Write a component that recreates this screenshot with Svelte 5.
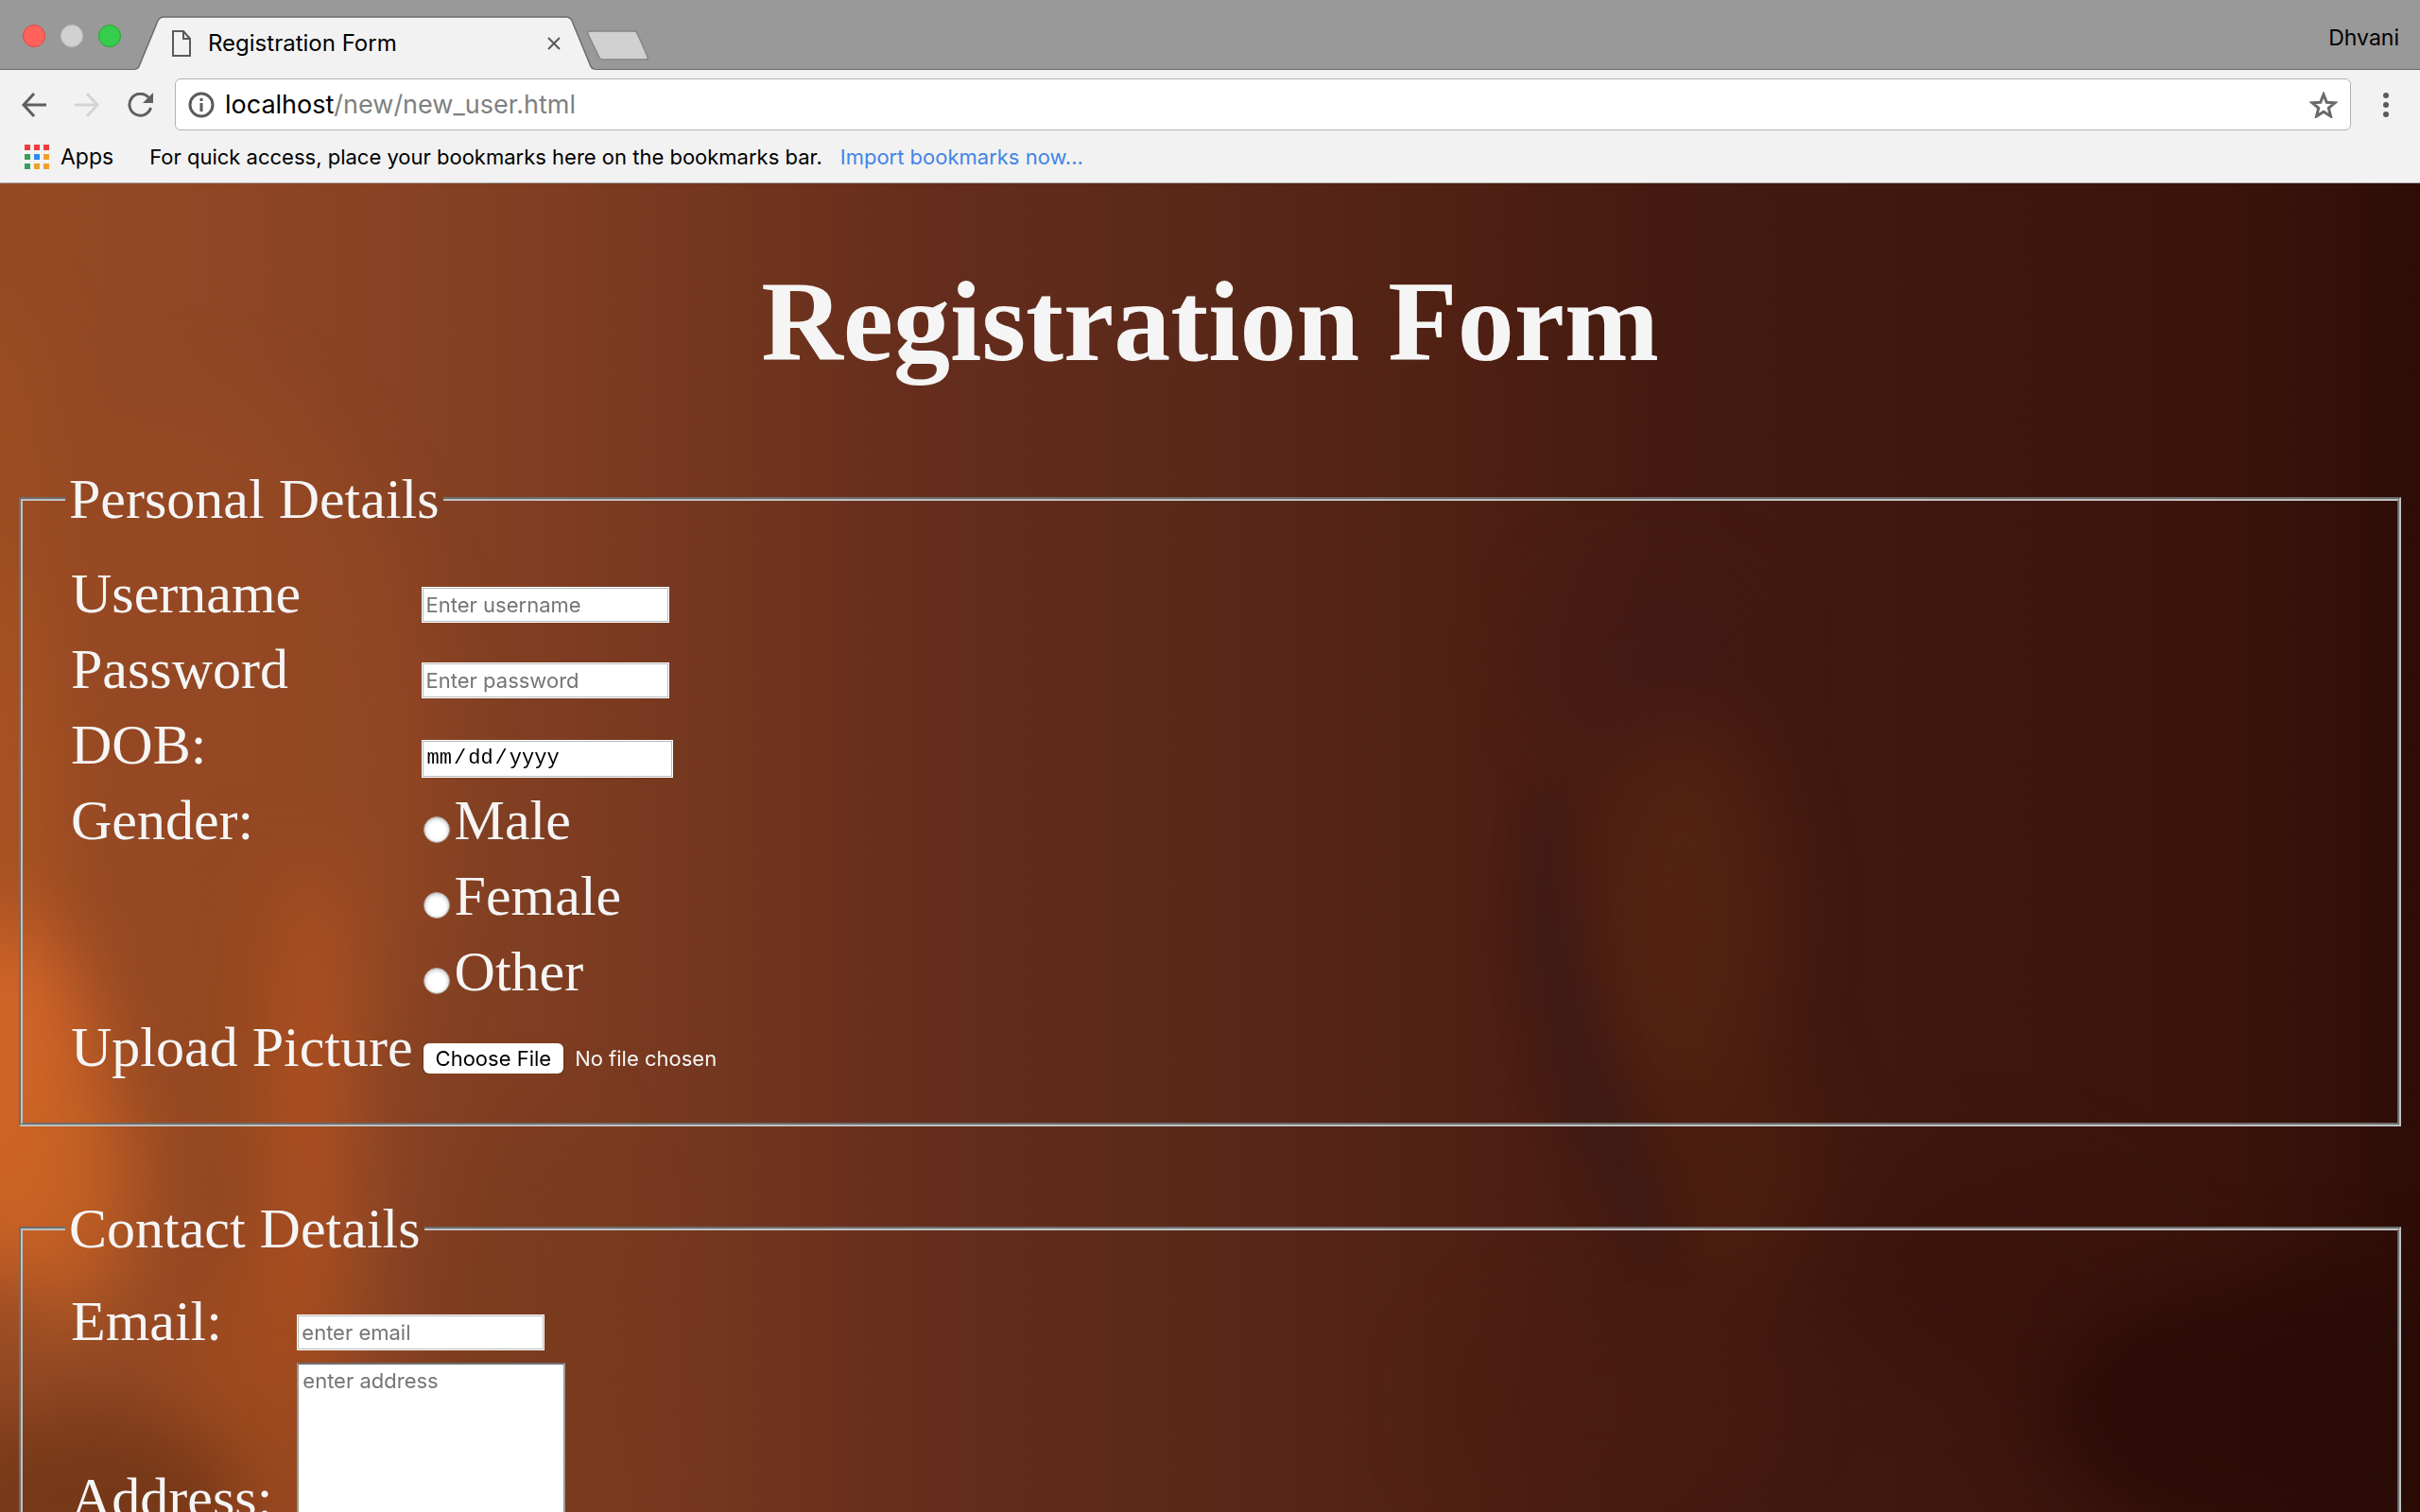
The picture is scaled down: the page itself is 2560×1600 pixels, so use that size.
<script>
  const genders = ['Male', 'Female', 'Other'];
  const appColors = ['#f23c3c', '#f23c3c', '#f23c3c', '#36a05c', '#2a8cf0', '#f0a02a', '#36a05c', '#f0a02a', '#f0a02a'];
  // Soft patches of light and shade on the backdrop, painted in order.
  const blobs = [
    { x: 0, y: 330, rx: 50, ry: 200, c: '#a8521f', o: 0.4 },
    { x: 220, y: 640, rx: 240, ry: 420, c: '#984a23', o: 0.6 },
    { x: 0, y: 760, rx: 60, ry: 360, c: '#b85a22', o: 0.6 },
    { x: 10, y: 970, rx: 95, ry: 190, c: '#d96829', o: 0.85 },
    { x: 70, y: 1070, rx: 80, ry: 140, c: '#c86324', o: 0.7 },
    { x: 330, y: 1010, rx: 34, ry: 300, c: '#bf5522', o: 0.8 },
    { x: 270, y: 1280, rx: 90, ry: 180, c: '#a84c1c', o: 0.6 },
    { x: 245, y: 900, rx: 26, ry: 200, c: '#964819', o: 0.6 },
    { x: 90, y: 1390, rx: 170, ry: 90, c: '#6e3415', o: 0.8 },
    { x: 560, y: 1240, rx: 110, ry: 260, c: '#74381a', o: 0.4 },
    { x: 1740, y: 500, rx: 120, ry: 90, c: '#421a18', o: 0.4 },
    { x: 1780, y: 780, rx: 100, ry: 210, c: '#582513', o: 0.7 },
    { x: 1830, y: 1040, rx: 90, ry: 140, c: '#4f200d', o: 0.6 },
    { x: 1700, y: 1290, rx: 180, ry: 100, c: '#4b1c0f', o: 0.5 },
    { x: 2100, y: 1150, rx: 180, ry: 120, c: '#38120a', o: 0.5 },
    { x: 2440, y: 1300, rx: 280, ry: 150, c: '#280a05', o: 0.75 }
  ];
</script>

<div class="window">
  <header>
    <div class="tabstrip">
      <div class="lights">
        <button class="light red" aria-label="Close window"></button>
        <button class="light gray" aria-label="Minimize window"></button>
        <button class="light green" aria-label="Zoom window"></button>
      </div>
      <div class="tab">
        <svg class="shape" viewBox="0 0 486 57" width="486" height="57" aria-hidden="true">
          <path d="M0 56 C3 56 4 54 5 51 L24 5 Q26 1 30 1 H456 Q460 1 462 5 L481 51 C482 54 483 56 486 56 V57 H0Z" fill="#f2f2f2" />
          <path d="M0 56 C3 56 4 54 5 51 L24 5 Q26 1 30 1 H456 Q460 1 462 5 L481 51 C482 54 483 56 486 56" fill="none" stroke="#6c6c6c" stroke-width="1.500" />
        </svg>
        <svg class="file" viewBox="0 0 20 28" width="20" height="28" aria-hidden="true">
          <path d="M1 1H12L19 9V27H1ZM12 1V9H19" fill="none" stroke="#5a5a5a" stroke-width="2" />
        </svg>
        <span class="title">Registration Form</span>
        <button class="close" aria-label="Close tab">
          <svg viewBox="0 0 14 14" width="14" height="14"><path d="M1 1L13 13M13 1L1 13" stroke="#5a5a5a" stroke-width="2" /></svg>
        </button>
      </div>
      <button class="newtab" aria-label="New tab">
        <svg viewBox="0 0 66 33" width="66" height="33">
          <path d="M3 1H50Q52 1 53 3L64 28Q65 31 62 31H16Q14 31 13 29L1 4Q0 1 3 1Z" fill="#d0d0d0" stroke="#858585" stroke-width="1.500" />
        </svg>
      </button>
      <button class="user">Dhvani</button>
    </div>
    <div class="toolbar">
      <button aria-label="Back">
        <svg viewBox="0 0 26 26" width="26" height="26"><path d="M26 13H2M13 1L2 13L13 25" fill="none" stroke="#5f5f5f" stroke-width="3" /></svg>
      </button>
      <button aria-label="Forward">
        <svg viewBox="0 0 26 26" width="26" height="26"><path d="M0 13H24M13 1L24 13L13 25" fill="none" stroke="#d4d4d4" stroke-width="3" /></svg>
      </button>
      <button aria-label="Reload">
        <svg viewBox="0 0 28 26" width="28" height="26">
          <path d="M22 5A11.500 11.500 0 1 0 24.500 16" fill="none" stroke="#5f5f5f" stroke-width="3" />
          <path d="M27 0V11H16Z" fill="#5f5f5f" />
        </svg>
      </button>
      <div class="omnibox">
        <svg viewBox="0 0 28 28" width="28" height="28" aria-hidden="true">
          <circle cx="14" cy="14" r="12" fill="none" stroke="#5a5a5a" stroke-width="3" />
          <path d="M14 12V21M14 7V10" stroke="#5a5a5a" stroke-width="3" />
        </svg>
        <div class="url" role="textbox" tabindex="0" aria-label="Address bar"><b>localhost</b>/new/new_user.html</div>
        <button aria-label="Bookmark this page">
          <svg viewBox="0 0 30 28" width="30" height="28"><path d="M15 3L18.300 11.200L27 11.800L20.300 17.400L22.500 26L15 21.200L7.500 26L9.700 17.400L3 11.800L11.700 11.200Z" fill="none" stroke="#6a6a6a" stroke-width="3" /></svg>
        </button>
      </div>
      <button class="menu" aria-label="Menu">
        <svg viewBox="0 0 6 26" width="6" height="26"><g fill="#5a5a5a"><circle cx="3" cy="3" r="3" /><circle cx="3" cy="13" r="3" /><circle cx="3" cy="23" r="3" /></g></svg>
      </button>
    </div>
    <nav class="bookmarks">
      <button class="apps">
        <svg viewBox="0 0 26 26" width="26" height="26" aria-hidden="true">
          {#each appColors as color, i}
            <rect x={(i % 3) * 10} y={Math.floor(i / 3) * 10} width="6" height="6" fill={color} />
          {/each}
        </svg>
        Apps
      </button>
      <span>For quick access, place your bookmarks here on the bookmarks bar.</span>
      <a href="#import">Import bookmarks now...</a>
    </nav>
  </header>

  <main>
    <svg class="backdrop" viewBox="0 0 2560 1406" preserveAspectRatio="none" aria-hidden="true">
      <defs>
        <linearGradient id="base">
          <stop offset="0" stop-color="#964a24" />
          <stop offset="0.08" stop-color="#904725" />
          <stop offset="0.16" stop-color="#884324" />
          <stop offset="0.24" stop-color="#7d3c21" />
          <stop offset="0.31" stop-color="#71351e" />
          <stop offset="0.38" stop-color="#662d1d" />
          <stop offset="0.5" stop-color="#592819" />
          <stop offset="0.6" stop-color="#502013" />
          <stop offset="0.68" stop-color="#451b11" />
          <stop offset="0.8" stop-color="#3e170e" />
          <stop offset="0.92" stop-color="#3a140b" />
          <stop offset="1" stop-color="#2d0d06" />
        </linearGradient>
        <filter id="soft" x="-50%" y="-50%" width="200%" height="200%" color-interpolation-filters="sRGB"><feGaussianBlur stdDeviation="40" /></filter>
        <filter id="streak" x="-50%" y="-50%" width="200%" height="200%" color-interpolation-filters="sRGB"><feGaussianBlur stdDeviation="16" /></filter>
      </defs>
      <rect width="2560" height="1406" fill="url(#base)" />
      <g filter="url(#soft)">
        {#each blobs as b}
          <ellipse cx={b.x} cy={b.y} rx={b.rx} ry={b.ry} fill={b.c} opacity={b.o} />
        {/each}
      </g>
      <path d="M1620 640L1655 650L1670 780L1700 900L1750 1050L1770 1140L1730 1130L1640 980L1600 800Z" fill="#3c1b17" opacity="0.65" filter="url(#streak)" />
    </svg>
    <form>
      <h1>Registration Form</h1>
      <fieldset>
        <legend>Personal Details</legend>
        <table>
          <tbody>
            <tr><td><label for="username">Username</label></td><td><input id="username" type="text" placeholder="Enter username" /></td></tr>
            <tr><td><label for="password">Password</label></td><td><input id="password" type="password" placeholder="Enter password" /></td></tr>
            <tr><td><label for="dob">DOB:</label></td><td><input id="dob" type="date" /></td></tr>
            {#each genders as g, i}
              <tr>
                <td>{i === 0 ? 'Gender:' : ''}</td>
                <td><label><input type="radio" name="gender" value={g} />{g}</label></td>
              </tr>
            {/each}
            <tr><td><label for="picture">Upload Picture</label></td><td><input id="picture" type="file" /></td></tr>
          </tbody>
        </table>
      </fieldset>
      <fieldset class="contact">
        <legend>Contact Details</legend>
        <table>
          <tbody>
            <tr><td><label for="email">Email:</label></td><td><input id="email" type="email" placeholder="enter email" /></td></tr>
            <tr class="tall"><td><label for="address">Address:</label></td><td><textarea id="address" placeholder="enter address"></textarea></td></tr>
          </tbody>
        </table>
      </fieldset>
    </form>
  </main>
</div>

<style>
  :global(body) { margin: 0; }
  .window {
    display: flex;
    flex-direction: column;
    height: 100vh;
    overflow: hidden;
    font-family: Inter, "Liberation Sans", sans-serif;
    color: #000;
  }
  button {
    display: flex;
    align-items: center;
    padding: 0;
    border: 0;
    background: none;
    font: inherit;
    color: inherit;
  }
  header { background: #f2f2f2; border-bottom: 1px solid #b2b2b2; }
  .tabstrip {
    display: flex;
    align-items: flex-start;
    box-sizing: border-box;
    height: 74px;
    padding: 0 22px 0 24px;
    background: #999;
    box-shadow: inset 0 -1px #6c6c6c;
  }
  .lights { display: flex; gap: 16px; margin-top: 26px; }
  .light { box-sizing: border-box; width: 24px; height: 24px; border: 1px solid #e2463f; border-radius: 50%; background: #ff625b; }
  .gray { border-color: #bebebe; background: #d1d1d1; }
  .green { border-color: #23a835; background: #35cd4b; }
  .tab {
    position: relative;
    display: flex;
    align-items: center;
    box-sizing: border-box;
    width: 486px;
    height: 57px;
    margin: 17px 0 0 15px;
    padding: 0 36px 0 39px;
  }
  .shape { position: absolute; inset: 0; }
  .file, .title, .close { position: relative; }
  .title { flex: 1; margin-left: 18px; font-size: 24px; }
  .newtab { margin: 32px 0 0 -8px; }
  .user { margin: 24px 0 0 auto; font-size: 23px; line-height: 32px; }
  .toolbar { display: flex; align-items: center; gap: 30px; padding: 9px 33px 9px 23px; }
  .omnibox {
    display: flex;
    flex: 1;
    align-items: center;
    box-sizing: border-box;
    height: 55px;
    margin: 0 4px 0 -8px;
    padding: 0 13px;
    border: 1px solid #b2b2b2;
    border-radius: 6px;
    background: #fff;
  }
  .url { flex: 1; margin-left: 11px; font-size: 27px; color: #808080; }
  .url b { font-weight: 400; color: #000; }
  .bookmarks { display: flex; align-items: center; height: 38px; padding: 0 26px 8px; font-size: 22px; }
  .apps { gap: 12px; margin-right: 38px; font-size: 23px; }
  .bookmarks a { margin-left: 19px; color: #4384e6; text-decoration: none; }

  main { position: relative; flex: 1; min-height: 0; overflow: hidden; }
  .backdrop { position: absolute; inset: 0; width: 100%; height: 100%; }
  form {
    position: relative;
    padding: 0 16px;
    font-family: "Liberation Serif", "Times New Roman", serif;
    font-size: 60px;
    line-height: 68px;
    color: #f5f5f5;
  }
  h1 { margin: 78px 0 84px; font-size: 120px; line-height: 138px; text-align: center; }
  fieldset { margin: 0 4px 74px; padding: 26px 45px 36px; border: 4px groove #c0c0c0; }
  legend { padding: 0 4px; }
  table { border-spacing: 4px; }
  tr { height: 76px; }
  td { padding: 2px; vertical-align: baseline; }
  td:first-child { padding-right: 3px; }
  .contact { padding-top: 24px; }
  .contact tr { height: 74px; }
  .contact td:first-child { padding-right: 20px; }
  .contact .tall td { vertical-align: middle; }
  input, textarea { margin: 0; font: 22px/26px Inter, "Liberation Sans", sans-serif; }
  input[type='text'], input[type='password'], input[type='email'], input[type='date'] {
    box-sizing: border-box;
    width: 262px;
    height: 38px;
    padding: 2px 4px;
    border: 1px solid #fff;
    border-radius: 0;
    background: #fff;
    box-shadow: inset 0 0 0 1px #b8bcbc;
    color: #000;
  }
  input[type='date'] {
    width: 266px;
    height: 40px;
    font: 22px/26px "Liberation Mono", monospace;
  }
  input::-webkit-datetime-edit-text { padding: 0 1px; }
  input::-webkit-calendar-picker-indicator { display: none; }
  ::placeholder { color: #757575; }
  input[type='radio'] {
    appearance: none;
    width: 28px;
    height: 28px;
    margin: 0 5px -4px 2px;
    border: 1px solid #a89c96;
    border-radius: 50%;
    box-sizing: border-box;
    background: #fff;
    box-shadow: inset 0 1px 4px #b4b4b4;
  }
  input[type='file'] { color: #f5f5f5; }
  input::file-selector-button {
    height: 32px;
    margin: 0 12px 0 2px;
    padding: 0 13px;
    border: 0;
    border-radius: 6px;
    background: #fff;
    box-shadow: 0 1px 2px rgb(0 0 0 / 0.5);
    color: #000;
    font: inherit;
  }
  textarea {
    display: block;
    box-sizing: border-box;
    width: 284px;
    height: 286px;
    padding: 4px;
    border: 2px solid #999;
    border-top-color: #707070;
    border-radius: 0;
    background: #fff;
    resize: none;
  }
</style>
